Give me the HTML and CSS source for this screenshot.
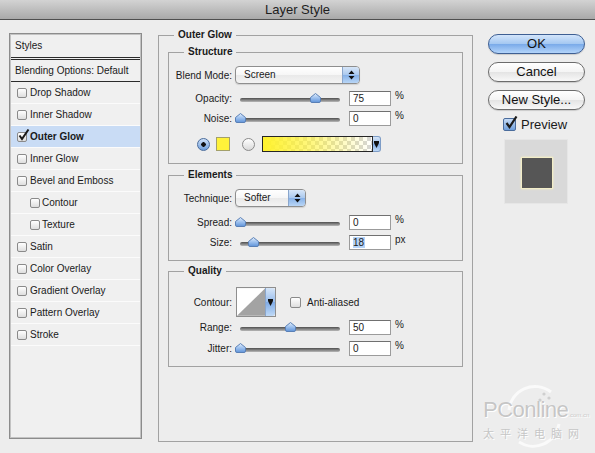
FILE: index.html
```html
<!DOCTYPE html>
<html lang="en">
<head>
    <meta charset="UTF-8">
    <title>Layer Style</title>
    <link rel="stylesheet" href="styles.css">
</head>
<body>
<svg class="defs" width="0" height="0">
    <defs>
        <linearGradient id="thumbGrad" x1="0" y1="0" x2="0" y2="1">
            <stop offset="0" stop-color="#e2eefc"/>
            <stop offset="0.5" stop-color="#9cc0ee"/>
            <stop offset="1" stop-color="#5f93d8"/>
        </linearGradient>
    </defs>
</svg>
<div class="window">
    <div class="titlebar">Layer Style</div>

    <div class="content">
        <!-- left: list of effects -->
        <div class="styles-list">
            <div class="list-head">Styles</div>
            <div class="list-blend">Blending Options: Default</div>
            <div class="list-item"><span class="check"></span>Drop Shadow</div>
            <div class="list-item"><span class="check"></span>Inner Shadow</div>
            <div class="list-item active">
                <span class="check"><svg class="tick" width="13" height="13" viewBox="0 0 13 13"><path d="M2.5 6.5 L5 10 L11.5 0.5" fill="none" stroke="#1b1b1b" stroke-width="2"/></svg></span>
                <b>Outer Glow</b>
            </div>
            <div class="list-item"><span class="check"></span>Inner Glow</div>
            <div class="list-item"><span class="check"></span>Bevel and Emboss</div>
            <div class="list-item sub"><span class="check"></span>Contour</div>
            <div class="list-item sub"><span class="check"></span>Texture</div>
            <div class="list-item"><span class="check"></span>Satin</div>
            <div class="list-item"><span class="check"></span>Color Overlay</div>
            <div class="list-item"><span class="check"></span>Gradient Overlay</div>
            <div class="list-item"><span class="check"></span>Pattern Overlay</div>
            <div class="list-item"><span class="check"></span>Stroke</div>
        </div>

        <!-- middle: settings -->
        <fieldset class="panel">
            <legend>Outer Glow</legend>

            <fieldset class="group structure">
                <legend>Structure</legend>
                <div class="row row-select">
                    <span class="lbl">Blend Mode:</span>
                    <div class="select select-wide">
                        <span class="select-text">Screen</span>
                        <span class="select-arrows"><svg width="7" height="10" viewBox="0 0 7 10"><path d="M3.5 0.5 L6.5 4 H0.5 Z M3.5 9.5 L6.5 6 H0.5 Z" fill="#111"/></svg></span>
                    </div>
                </div>
                <div class="row row-slider first">
                    <span class="lbl">Opacity:</span>
                    <div class="slider"><div class="track"><span class="thumb" style="left:75%"><svg width="11" height="10" viewBox="0 0 11 10"><path d="M5.5 0.5 L10.5 4.5 V8 Q10.5 9.5 9 9.5 H2 Q0.5 9.5 0.5 8 V4.5 Z" fill="url(#thumbGrad)" stroke="#5a80b6"/></svg></span></div></div>
                    <span class="field">75</span><span class="unit">%</span>
                </div>
                <div class="row row-slider">
                    <span class="lbl">Noise:</span>
                    <div class="slider"><div class="track"><span class="thumb" style="left:0%"><svg width="11" height="10" viewBox="0 0 11 10"><path d="M5.5 0.5 L10.5 4.5 V8 Q10.5 9.5 9 9.5 H2 Q0.5 9.5 0.5 8 V4.5 Z" fill="url(#thumbGrad)" stroke="#5a80b6"/></svg></span></div></div>
                    <span class="field">0</span><span class="unit">%</span>
                </div>
                <div class="row row-color">
                    <span class="radio on"></span>
                    <span class="swatch"></span>
                    <span class="radio"></span>
                    <span class="gradient"><span class="gradient-fill"></span><span class="drop"><svg width="5" height="7" viewBox="0 0 5 7"><path d="M0 0 H5 V2 L2.5 7 L0 2 Z" fill="#111"/></svg></span></span>
                </div>
            </fieldset>

            <fieldset class="group elements">
                <legend>Elements</legend>
                <div class="row row-select">
                    <span class="lbl">Technique:</span>
                    <div class="select select-short">
                        <span class="select-text">Softer</span>
                        <span class="select-arrows"><svg width="7" height="10" viewBox="0 0 7 10"><path d="M3.5 0.5 L6.5 4 H0.5 Z M3.5 9.5 L6.5 6 H0.5 Z" fill="#111"/></svg></span>
                    </div>
                </div>
                <div class="row row-slider first">
                    <span class="lbl">Spread:</span>
                    <div class="slider"><div class="track"><span class="thumb" style="left:0%"><svg width="11" height="10" viewBox="0 0 11 10"><path d="M5.5 0.5 L10.5 4.5 V8 Q10.5 9.5 9 9.5 H2 Q0.5 9.5 0.5 8 V4.5 Z" fill="url(#thumbGrad)" stroke="#5a80b6"/></svg></span></div></div>
                    <span class="field">0</span><span class="unit">%</span>
                </div>
                <div class="row row-slider">
                    <span class="lbl">Size:</span>
                    <div class="slider"><div class="track"><span class="thumb" style="left:13%"><svg width="11" height="10" viewBox="0 0 11 10"><path d="M5.5 0.5 L10.5 4.5 V8 Q10.5 9.5 9 9.5 H2 Q0.5 9.5 0.5 8 V4.5 Z" fill="url(#thumbGrad)" stroke="#5a80b6"/></svg></span></div></div>
                    <span class="field"><span class="selected">18</span></span><span class="unit">px</span>
                </div>
            </fieldset>

            <fieldset class="group quality">
                <legend>Quality</legend>
                <div class="row row-contour">
                    <span class="lbl">Contour:</span>
                    <span class="contour">
                        <svg class="contour-curve" width="29" height="28" viewBox="0 0 29 28"><rect width="29" height="28" fill="#fff"/><path d="M0 28 L29 0 V28 Z" fill="#a3a3a3"/></svg>
                        <span class="drop"><svg width="5" height="7" viewBox="0 0 5 7"><path d="M0 0 H5 V2 L2.5 7 L0 2 Z" fill="#111"/></svg></span>
                    </span>
                    <span class="check small"></span>
                    <span class="check-label">Anti-aliased</span>
                </div>
                <div class="row row-slider">
                    <span class="lbl">Range:</span>
                    <div class="slider"><div class="track"><span class="thumb" style="left:50%"><svg width="11" height="10" viewBox="0 0 11 10"><path d="M5.5 0.5 L10.5 4.5 V8 Q10.5 9.5 9 9.5 H2 Q0.5 9.5 0.5 8 V4.5 Z" fill="url(#thumbGrad)" stroke="#5a80b6"/></svg></span></div></div>
                    <span class="field">50</span><span class="unit">%</span>
                </div>
                <div class="row row-slider jitter">
                    <span class="lbl">Jitter:</span>
                    <div class="slider"><div class="track"><span class="thumb" style="left:0%"><svg width="11" height="10" viewBox="0 0 11 10"><path d="M5.5 0.5 L10.5 4.5 V8 Q10.5 9.5 9 9.5 H2 Q0.5 9.5 0.5 8 V4.5 Z" fill="url(#thumbGrad)" stroke="#5a80b6"/></svg></span></div></div>
                    <span class="field">0</span><span class="unit">%</span>
                </div>
            </fieldset>
        </fieldset>

        <!-- right: buttons and preview -->
        <div class="actions">
            <div class="btn btn-default">OK</div>
            <div class="btn">Cancel</div>
            <div class="btn">New Style...</div>
            <div class="preview-toggle">
                <span class="check blue"><svg class="tick" width="14" height="14" viewBox="0 0 14 14"><path d="M2.5 7 L5.5 11 L12.5 0.5" fill="none" stroke="#1b1b1b" stroke-width="2.2"/></svg></span>
                <span>Preview</span>
            </div>
            <div class="preview-box"><div class="preview-square"></div></div>
        </div>
    </div>

    <div class="watermark">
        <svg class="wm-ring" width="70" height="70" viewBox="0 0 70 70"><path d="M10 30 A26 26 0 0 1 52 12" fill="none" stroke="#fafafa" stroke-width="3"/><path d="M20 62 A26 26 0 0 0 60 44" fill="none" stroke="#fafafa" stroke-width="3"/><circle cx="45" cy="14" r="1.6" fill="#cfcfcf"/><circle cx="50" cy="18" r="1.6" fill="#cfcfcf"/><circle cx="41" cy="20" r="1.6" fill="#cfcfcf"/></svg>
        <div class="wm-name">PConline<span class="wm-domain">.com.cn</span></div>
        <div class="wm-cn">太平洋电脑网</div>
    </div>
</div>
</body>
</html>
```

FILE: styles.css
```css
* {
    box-sizing: border-box;
}

body {
    margin: 0;
    font-family: 'Liberation Sans', Arial, sans-serif;
    font-size: 10px;
    color: #1a1a1a;
    background: #ededed;
}

.defs {
    position: absolute;
}

.window {
    position: relative;
    width: 595px;
    height: 453px;
    overflow: hidden;
    background: #ededed;
}

.titlebar {
    height: 20px;
    line-height: 19px;
    text-align: center;
    font-size: 13px;
    color: #1e1e1e;
    background: linear-gradient(#d3d3d3, #a9a9a9);
    border-bottom: 1px solid #4f4f4f;
}

.content {
    display: flex;
    align-items: flex-start;
}

/* ---- styles list ---- */
.styles-list {
    width: 133px;
    height: 406px;
    margin: 13px 0 0 9px;
    background: #f0f0f0;
    border: 1px solid #8c8c8c;
    box-shadow: inset 0 0 0 1px #c3c3c3;
    padding: 1px;
}

.list-head {
    height: 25px;
    line-height: 22px;
    padding-left: 4px;
    border-bottom: 3px double #2b2b2b;
}

.list-blend {
    height: 22px;
    line-height: 21px;
    padding-left: 4px;
    border-bottom: 1px solid #2b2b2b;
}

.list-item {
    display: flex;
    align-items: center;
    height: 22px;
    padding-left: 6px;
    border-bottom: 1px solid #fbfbfb;
}

.list-item b {
    font-weight: bold;
}

.list-item.active {
    background: #c9dcf5;
}

.list-item.sub {
    padding-left: 19px;
}

.list-item .check {
    margin-right: 3px;
}

.list-item.sub .check {
    margin-right: 2px;
}

.check {
    position: relative;
    display: inline-block;
    width: 10px;
    height: 10px;
    flex: none;
    border: 1px solid #8a8a8a;
    border-radius: 2px;
    background: linear-gradient(#ffffff, #dedede);
}

.check .tick {
    position: absolute;
    left: -1px;
    top: -4px;
}

.check.small {
    width: 11px;
    height: 11px;
    margin-left: 14px;
}

.check.blue {
    width: 13px;
    height: 13px;
    border-color: #4a6c9c;
    background: linear-gradient(#c7dcf6, #6f9fdc);
}

.check.blue .tick {
    left: 0;
    top: -3px;
}

.check-label {
    margin-left: 6px;
}

/* ---- centre panel ---- */
fieldset {
    margin: 0;
    padding: 0;
    min-width: 0;
    border: 1px solid #a2a2a2;
}

legend {
    margin-left: 15px;
    padding: 0 4px;
    line-height: 12px;
    font-weight: bold;
}

.panel {
    width: 315px;
    margin: 9px 0 0 16px;
    padding-bottom: 74px;
}

.group {
    margin: 0 9px;
}

.structure {
    margin-top: 5px;
    padding-bottom: 9px;
}

.elements {
    margin-top: 5px;
    padding-bottom: 8px;
}

.quality {
    margin-top: 4px;
    padding-bottom: 8px;
}

.row {
    display: flex;
    align-items: center;
    height: 20px;
}

.row-select {
    height: 22px;
    margin-top: 6px;
}

.row-slider.first {
    margin-top: 2px;
}

.elements .row-slider.first {
    margin-top: 3px;
}

.row-slider.jitter {
    margin-top: 1px;
}

.row-color {
    margin-top: 6px;
    padding-left: 28px;
}

.row-contour {
    height: 30px;
    margin-top: 10px;
}

.lbl {
    width: 63px;
    flex: none;
    text-align: right;
}

.select {
    display: flex;
    height: 18px;
    margin-left: 3px;
    border: 1px solid #8e8e8e;
    border-radius: 4px;
    overflow: hidden;
    background: linear-gradient(#ffffff, #f6f6f6 50%, #e9e9e9 51%, #f3f3f3);
    box-shadow: 0 1px 1px rgba(0, 0, 0, 0.12);
}

.select-wide {
    width: 125px;
}

.select-short {
    width: 71px;
}

.select-text {
    flex: 1;
    line-height: 16px;
    padding-left: 8px;
}

.select-arrows {
    display: flex;
    align-items: center;
    justify-content: center;
    width: 17px;
    border-left: 1px solid #8aa6cc;
    background: linear-gradient(#d7e6f8, #a9c8ee 50%, #86b1e8 51%, #b9d6f6);
}

.slider {
    width: 108px;
    height: 20px;
    margin-left: 4px;
    padding: 10px 4px 6px;
}

.track {
    position: relative;
    height: 4px;
    border-radius: 2px;
    background: linear-gradient(#4f4f4f, #8c8c8c 60%, #b9b9b9);
}

.thumb {
    position: absolute;
    bottom: -1px;
    width: 11px;
    height: 10px;
    margin-left: -5px;
}

.thumb svg {
    display: block;
}

.field {
    display: block;
    width: 42px;
    height: 15px;
    margin-left: 5px;
    padding-left: 3px;
    line-height: 13px;
    background: #fff;
    border: 1px solid #9b9b9b;
    border-top-color: #707070;
}

.selected {
    background: #b5d3f7;
    padding-right: 1px;
}

.unit {
    margin-left: 4px;
    align-self: flex-start;
    margin-top: 2px;
}

.radio {
    display: inline-block;
    width: 13px;
    height: 13px;
    flex: none;
    border: 1px solid #8a8a8a;
    border-radius: 50%;
    background: linear-gradient(#ffffff, #d9d9d9);
    margin-left: 12px;
}

.radio.on {
    margin-left: 0;
    border-color: #4a6c9c;
    background: radial-gradient(circle, #111 0 2px, transparent 2.5px), linear-gradient(#cfe1f8, #6f9fdc);
}

.swatch {
    width: 14px;
    height: 14px;
    margin-left: 6px;
    background: #fff23a;
    border: 1px solid #a3a06b;
}

.gradient {
    display: flex;
    height: 16px;
    margin-left: 7px;
}

.gradient-fill {
    width: 111px;
    border: 1px solid #262626;
    background:
        linear-gradient(to right, #fff22d, rgba(255, 242, 45, 0.6) 45%, rgba(255, 242, 45, 0)),
        repeating-conic-gradient(#ffffff 0 25%, #d6d6d6 0 50%) 0 0 / 8px 8px;
}

.drop {
    display: flex;
    align-items: center;
    justify-content: center;
    width: 8px;
    border: 1px solid #7d9cc6;
    border-left: 0;
    border-radius: 0 3px 3px 0;
    background: linear-gradient(#d7e6f8, #98bdee 50%, #7fabe6 51%, #c0daf7);
}

.contour {
    display: flex;
    width: 40px;
    height: 30px;
    margin-left: 4px;
    border: 1px solid #8e8e8e;
}

.contour .drop {
    width: 10px;
    border: 0;
    border-left: 1px solid #8aa6cc;
}

/* ---- right column ---- */
.actions {
    width: 97px;
    margin: 14px 0 0 15px;
    display: flex;
    flex-direction: column;
}

.btn {
    height: 20px;
    margin-bottom: 8px;
    line-height: 18px;
    text-align: center;
    font-size: 13px;
    color: #111;
    border: 1px solid #6c6c6c;
    border-radius: 10px;
    background: linear-gradient(#ffffff, #f4f4f4 50%, #e4e4e4 51%, #f8f8f8);
    box-shadow: 0 1px 1px rgba(0, 0, 0, 0.15);
}

.btn-default {
    border-color: #3e5f93;
    background: linear-gradient(#d3e5fb, #a3c7f1 50%, #79aae9 51%, #b3d4fa);
}

.preview-toggle {
    display: flex;
    align-items: center;
    height: 14px;
    margin-top: -1px;
    padding-left: 15px;
    font-size: 13px;
}

.preview-toggle .check {
    margin-right: 5px;
}

.preview-box {
    width: 64px;
    height: 65px;
    margin: 8px 0 0 16px;
    padding: 17px 0 0 16px;
    background: #d9d9d9;
    border: 1px solid #e6e6e6;
}

.preview-square {
    width: 32px;
    height: 32px;
    background: #565656;
    border: 1px solid #f2edc8;
    box-shadow: 0 0 2px #f7f1c0;
}

/* ---- watermark ---- */
.watermark {
    position: absolute;
    left: 483px;
    top: 384px;
    width: 105px;
    color: #c6c6c6;
}

.wm-ring {
    position: absolute;
    left: 16px;
    top: -4px;
}

.wm-name {
    position: relative;
    font-size: 22px;
    line-height: 24px;
    margin-top: 14px;
    letter-spacing: -0.5px;
    text-shadow: 0 0 1px #fff, 1px 1px 0 #fff;
}

.wm-domain {
    font-size: 6px;
    letter-spacing: 0;
}

.wm-cn {
    position: relative;
    font-family: 'Noto Sans CJK SC', sans-serif;
    font-size: 11px;
    line-height: 12px;
    letter-spacing: 6px;
    text-shadow: 1px 1px 0 #fff;
}
```
